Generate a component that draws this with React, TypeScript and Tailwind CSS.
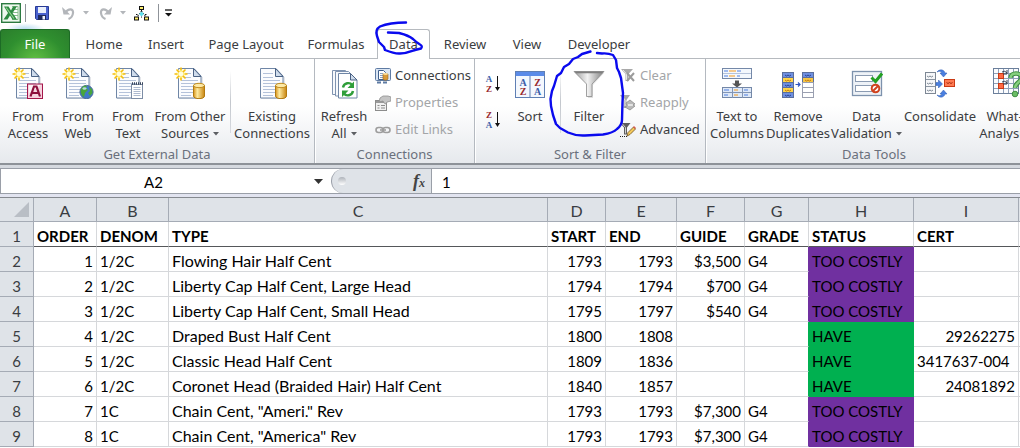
import React from "react";

type Kids = { children: React.ReactNode };

/* ---------- Icons ---------- */

function Svg32({ children }: Kids) {
  return (
    <svg viewBox="0 0 32 32" className="block size-8 shrink-0" aria-hidden="true">
      {children}
    </svg>
  );
}

function Svg16({ children }: Kids) {
  return (
    <svg viewBox="0 0 16 16" className="block size-4 shrink-0" aria-hidden="true">
      {children}
    </svg>
  );
}

function Page() {
  return (
    <g>
      <path d="M5 32h23V10" fill="none" stroke="#c9ced6" strokeWidth="1" />
      <path d="M4.500 1.500h15.500l7 7.500v22h-22.500z" fill="#fbfcfe" stroke="#6f86a6" />
      <path d="M19.500 1.500v8h7.500z" fill="#cfdcec" stroke="#4b6284" />
      <path
        d="M7 6.500h10M7 10.500h10M7 13.500h17M7 16.500h17M7 19.500h17M7 22.500h17M7 25.500h17M7 28.500h10"
        stroke="#b4c2da"
      />
    </g>
  );
}

function Burst() {
  return (
    <g>
      <circle cx="7" cy="7" r="5" fill="#fff9d0" />
      <path
        d="M7 .5v13M.5 7h13M2.500 2.500l9 9M11.500 2.500l-9 9"
        stroke="#f5bd0c"
        strokeWidth="1.600"
      />
      <path d="M7 3v8M3 7h8" stroke="#fff27a" strokeWidth="1.500" />
      <circle cx="7" cy="7" r="2.400" fill="#fffde0" />
    </g>
  );
}

function Cylinder() {
  return (
    <g>
      <path
        d="M19.500 18.500v10.500c0 3.500 11 3.500 11 0v-10.500z"
        fill="url(#gold)"
        stroke="#b27a10"
      />
      <ellipse cx="25" cy="18.500" rx="5.500" ry="2.200" fill="#fde9a6" stroke="#c08a1c" />
    </g>
  );
}

const AccessIcon = () => (
  <Svg32>
    <Page />
    <Burst />
    <rect x="15.500" y="17" width="15" height="14.500" fill="#f6d3df" stroke="#a4164a" />
    <path d="M17 18h12l-12 8z" fill="#fff" opacity=".7" />
    <path
      d="M18.500 29.500l3.500-10h2.500l3.500 10M20 26h6.500"
      fill="none"
      stroke="#8d0f3c"
      strokeWidth="2.200"
    />
  </Svg32>
);

const WebIcon = () => (
  <Svg32>
    <Page />
    <Burst />
    <circle cx="24.500" cy="25" r="6.600" fill="#3f78c9" stroke="#4b6a9a" />
    <path
      d="M19 22c2-4 5-4 6-3l-1 2 2 2-3 3-1 4c-2-1-4-4-3-8zM27 20l3 2 .5 4-2.500 3-2-3 2-2z"
      fill="#48a53c"
    />
    <ellipse cx="22.500" cy="21.500" rx="2" ry="1.300" fill="#cfe7ff" opacity=".8" />
  </Svg32>
);

const TextIcon = () => (
  <Svg32>
    <Page />
    <Burst />
    <rect x="19.500" y="17.500" width="11" height="14" fill="#fff" stroke="#7d8da6" />
    <path d="M20 16.500h11" stroke="#39465c" strokeWidth="2.500" strokeDasharray="1 1" />
    <path
      d="M21.500 20.500h7M21.500 22.500h7M21.500 24.500h7M21.500 26.500h7M21.500 28.500h7"
      stroke="#aebad0"
    />
  </Svg32>
);

const OtherIcon = () => (
  <Svg32>
    <Page />
    <Burst />
    <Cylinder />
  </Svg32>
);

const ExistingIcon = () => (
  <Svg32>
    <Page />
    <Cylinder />
  </Svg32>
);

const RefreshIcon = () => (
  <Svg32>
    <path d="M4.500 3.500h13l4 4v20h-17z" fill="#f7f9fc" stroke="#7f93b0" />
    <path d="M7.500 4.500h13l4 4v20.500h-17z" fill="#f7f9fc" stroke="#7f93b0" />
    <path d="M10.500 6.500h12l6.500 6.500v18h-18.500z" fill="#fff" stroke="#6f86a6" />
    <path d="M22.500 6.500v6.500h6.500z" fill="#cfdcec" stroke="#4b6284" />
    <path
      d="M15 20.500c1-5 7-5.500 9-2.500M25 24c-1 5-7 5.500-9 2.500"
      fill="none"
      stroke="#2f9e3a"
      strokeWidth="2.400"
    />
    <path d="M26 14.500v6.500h-6.500zM14 30v-6.500h6.500z" fill="#2f9e3a" />
  </Svg32>
);

const SortIcon = () => (
  <Svg32>
    <rect x="1.500" y="4.500" width="29" height="26" fill="#f4f8fe" stroke="#5f7fb4" />
    <rect x="2" y="5" width="28" height="4" fill="#5b8be8" />
    <path d="M16 9v21" stroke="#5f7fb4" />
    <g fontFamily="Liberation Serif, serif" fontWeight="700" fontSize="10" textAnchor="middle">
      <text x="9" y="18.500" fill="#3c5da8">A</text>
      <text x="9" y="28" fill="#98282d">Z</text>
      <text x="23.500" y="18.500" fill="#98282d">Z</text>
      <text x="23.500" y="28" fill="#3c5da8">A</text>
    </g>
  </Svg32>
);

const FunnelIcon = () => (
  <Svg32>
    <path d="M3 6l12 12v13h5V18L31 6z" fill="#000" opacity=".12" />
    <path d="M1 4.500h30L19 17v12.500h-5.500V17z" fill="url(#steel)" stroke="#8a8a8a" strokeWidth=".8" />
    <path d="M1.500 4.500h29l-1.500 1.800H3z" fill="#7e7e7e" />
  </Svg32>
);

const TextToColumnsIcon = () => (
  <Svg32>
    <rect x="1.500" y="1.500" width="29" height="10" fill="#f4f8fd" stroke="#7488a8" />
    <path d="M2 6.500h28" stroke="#b5c3da" />
    <path d="M3 4h4M16 4h4M3 9h4M16 9h3" stroke="#4f7fe0" strokeWidth="1.200" />
    <path d="M8 4h7M8 9h6" stroke="#f39a1e" strokeWidth="1.200" />
    <path d="M14 13.500h4v3h3l-5 4-5-4h3z" fill="#555" />
    <rect x="1.500" y="20.500" width="29" height="10" fill="#dfe9f7" stroke="#7488a8" />
    <path d="M2 25.500h28M11.500 21v10M21.500 21v10" stroke="#8295b5" />
    <path d="M3 23h5M23 23h4M3 28h4M23 28h4" stroke="#4f7fe0" strokeWidth="1.200" />
    <path d="M13 23h4M13 28h4" stroke="#f39a1e" strokeWidth="1.200" />
  </Svg32>
);

const DuplicatesIcon = () => (
  <Svg32>
    <g stroke="#5b6f9c">
      <rect x=".5" y="5.500" width="11" height="5" fill="#6f8fe0" />
      <rect x=".5" y="10.500" width="11" height="5" fill="#ffd54a" />
      <rect x=".5" y="15.500" width="11" height="5" fill="#6f8fe0" />
      <rect x=".5" y="20.500" width="11" height="5" fill="#ffd54a" />
      <rect x=".5" y="25.500" width="11" height="5" fill="#6f8fe0" />
      <rect x="20.500" y="5.500" width="11" height="5" fill="#6f8fe0" />
      <rect x="20.500" y="10.500" width="11" height="5" fill="#f6c646" />
      <rect x="20.500" y="15.500" width="11" height="5" fill="#fff" stroke="#9a9fb0" />
      <rect x="20.500" y="20.500" width="11" height="5" fill="#fff" stroke="#9a9fb0" />
      <rect x="20.500" y="25.500" width="11" height="5" fill="#fff" stroke="#9a9fb0" />
    </g>
    <path
      d="M3 8l1.500 1L6 8l1.500 1L9 8M3 18l1.500 1L6 18l1.500 1L9 18M3 28l1.500 1L6 28l1.500 1L9 28M23 8l1.500 1L26 8l1.500 1L29 8"
      fill="none"
      stroke="#27418f"
    />
    <path
      d="M3 13l1.500 1L6 13l1.500 1L9 13M3 23l1.500 1L6 23l1.500 1L9 23M23 13l1.500 1 1.500-1 1.500 1 1.500-1"
      fill="none"
      stroke="#c27a10"
    />
    <path d="M13.500 17.500h4M16 15.500l2 2-2 2" fill="none" stroke="#2f55c0" strokeWidth="1.200" />
  </Svg32>
);

const ValidationIcon = () => (
  <Svg32>
    <rect x="1.500" y="4.500" width="29" height="24" fill="#eef2f7" stroke="#7d92ad" strokeWidth="1.300" />
    <rect x="4.500" y="8.500" width="17" height="6" fill="#fff" stroke="#8b9bb2" />
    <rect x="4.500" y="18.500" width="17" height="6" fill="#fff" stroke="#8b9bb2" />
    <path d="M20.500 10.500l4 4L31 6.500" fill="none" stroke="#23a023" strokeWidth="3" />
    <circle cx="24.500" cy="21.500" r="3.800" fill="#fff" stroke="#d0431f" strokeWidth="2" />
    <path d="M22 24l5-5" stroke="#d0431f" strokeWidth="2" />
  </Svg32>
);

const ConsolidateIcon = () => (
  <Svg32>
    <rect x="1.500" y="5.500" width="10" height="21" fill="#f6f7f9" stroke="#7d8794" />
    <path d="M2 12.500h9M2 19.500h9" stroke="#8c96a3" />
    <path
      d="M3 9l1.500 1L6 9l1.500 1L9 9M3 16l1.500 1L6 16l1.500 1L9 16M3 23l1.500 1L6 23l1.500 1L9 23"
      fill="none"
      stroke="#7d8794"
    />
    <path d="M12 15.500h2.500v-2.500l4 4-4 4v-2.500H12z" fill="#4a7fe0" stroke="#2b58b0" strokeWidth=".5" />
    <path d="M13 5c2-3 7-3 8 1h2l-3.500 4-3.500-4h2c-1-2-3-2-5-1z" fill="#4a7fe0" stroke="#2b58b0" strokeWidth=".5" />
    <path d="M13 28c2 3 7 3 8-1h2l-3.500-4-3.500 4h2c-1 2-3 2-5 1z" fill="#4a7fe0" stroke="#2b58b0" strokeWidth=".5" />
    <rect x="20.500" y="12.500" width="10" height="7" fill="#ff7a52" stroke="#c93a15" />
    <path d="M22.500 15.500l1.500 1 1.500-1 1.500 1 1.500-1" fill="none" stroke="#a32b0c" />
  </Svg32>
);

const WhatIfIcon = () => (
  <Svg32>
    <rect x=".5" y="1.500" width="25" height="25" fill="#fbfcfe" stroke="#6b7f9b" />
    <path d="M5.500 2v24M10.500 2v24M15.500 2v24M20.500 2v24M1 6.500h24M1 11.500h24M1 16.500h24M1 21.500h24" stroke="#8fa0b8" />
    <rect x="5.500" y="6.500" width="5" height="5" fill="#ff6a45" stroke="#c93a15" />
    <rect x="5.500" y="16.500" width="5" height="5" fill="#ff6a45" stroke="#c93a15" />
    <path d="M9 5q3-2 5 1M14 3v4h-4M9 15q3-2 5 1M14 13v4h-4" fill="none" stroke="#333e50" />
    <path
      d="M17.500 11c0-6 11-6 11 0 0 4-6.500 4.500-6.500 10"
      fill="none"
      stroke="#3f8f41"
      strokeWidth="4.500"
    />
    <path d="M17.500 11c0-6 11-6 11 0 0 4-6.500 4.500-6.500 10" fill="none" stroke="#86cf7f" strokeWidth="2.500" />
    <circle cx="22" cy="27" r="2.800" fill="#6bbd66" stroke="#3f8f41" />
  </Svg32>
);

const ConnectionsIcon = () => (
  <Svg16>
    <rect x=".5" y=".5" width="15" height="12" rx="1" fill="#dbe6f4" stroke="#5e7ba3" />
    <path d="M3.500 2.500h5l2 2v7h-7z" fill="#fff" stroke="#41608c" />
    <path d="M5 5.500h3M5 7.500h3M5 9.500h3" stroke="#8ba2c4" />
    <path d="M8 6v5c0 1.500 5 1.500 5 0V6z" fill="#d99a3a" stroke="#9a6418" strokeWidth=".6" />
    <ellipse cx="10.500" cy="6" rx="2.500" ry="1" fill="#fbdc98" />
    <path d="M2 14.500h11" stroke="#5e7ba3" strokeWidth="2" strokeDasharray="4 2" />
  </Svg16>
);

const PropertiesIcon = () => (
  <Svg16>
    <rect x=".5" y="5.500" width="11" height="10" fill="#f1f1f1" stroke="#8c8c8c" />
    <path d="M1 7h10" stroke="#9a9a9a" strokeWidth="2" />
    <path d="M2.500 10.500h2M6 10.500h4M2.500 13h2M6 13h4" stroke="#8c8c8c" />
    <path d="M5 3l3-2h5l3 1v4l-4 1-1 2-2-1-1-2-4 1z" fill="#c5c5c5" stroke="#8f8f8f" strokeWidth=".8" />
  </Svg16>
);

const LinksIcon = () => (
  <Svg16>
    <g fill="none" stroke="#9d9d9d" strokeWidth="1.600">
      <rect x="1" y="5.500" width="7" height="5" rx="2.500" />
      <rect x="8" y="5.500" width="7" height="5" rx="2.500" />
      <path d="M5 8h6" />
    </g>
  </Svg16>
);

const ClearIcon = () => (
  <Svg16>
    <path d="M1 1h12L8.500 6v7h-3V6z" fill="#a9a9a9" />
    <path d="M3 2l3.500 4v6" fill="none" stroke="#e8e8e8" />
    <path d="M7 5l7 8M14 5l-7 8" stroke="#9b9b9b" strokeWidth="2" />
  </Svg16>
);

const ReapplyIcon = () => (
  <Svg16>
    <path d="M0 0h10L6.500 5v8h-3V5z" fill="#a9a9a9" />
    <path d="M2 1l3 4v6" fill="none" stroke="#e8e8e8" />
    <path d="M6 8l4-3 5 4-3 1 3 1-5 4-5-3 2-1z" fill="#b9b9b9" stroke="#8e8e8e" strokeWidth=".8" />
    <path d="M8 10h5" stroke="#f3f3f3" strokeWidth="1.500" />
  </Svg16>
);

const AdvancedIcon = () => (
  <Svg16>
    <path d="M0 1h10.500L7 5.500v7H4v-7z" fill="#5e5e5e" />
    <path d="M2 1.500l3.500 4v6" fill="none" stroke="#cfcfcf" />
    <path d="M0 14.500h8" stroke="#222" strokeDasharray="1 1" />
    <path d="M7 14l1-3.500 5.500-5.500 2 2L10 12.500z" fill="#f5c95a" stroke="#6d5120" strokeWidth=".8" />
    <path d="M13 5l1-1 2 2-1 1z" fill="#d45a52" />
  </Svg16>
);

function SortArrowIcon({ top, bottom }: { top: string; bottom: string }) {
  const tone = (c: string) => (c === "A" ? "#3c5da8" : "#98282d");
  return (
    <svg viewBox="0 0 16 18" className="block h-[18px] w-4" aria-hidden="true">
      <g fontFamily="Liberation Serif, serif" fontWeight="700" fontSize="9" textAnchor="middle">
        <text x="4" y="7" fill={tone(top)}>{top}</text>
        <text x="4" y="17" fill={tone(bottom)}>{bottom}</text>
      </g>
      <path d="M12.500 1v12" stroke="#111" />
      <path d="M10 12h5l-2.500 4z" fill="#111" />
    </svg>
  );
}

function Caret({ className = "text-[#5c5f63]" }: { className?: string }) {
  return (
    <svg viewBox="0 0 6 4" className={"inline-block h-1 w-1.5 shrink-0 " + className} aria-hidden="true">
      <path d="M0 0h6L3 3.500z" fill="currentColor" />
    </svg>
  );
}

const ExcelIcon = () => (
  <svg viewBox="0 0 20 20" className="block size-5" aria-hidden="true">
    <rect x=".7" y=".7" width="18.600" height="18.600" fill="#eef8ee" stroke="#2c7a41" strokeWidth="1.400" />
    <path d="M11 3.500h6v13h-6" fill="#fff" stroke="#86bd8c" />
    <path d="M12 6.500h5M12 9.500h5M12 12.500h5" stroke="#86bd8c" />
    <path d="M3 3.500h4.500l2.500 4L12 3.500h4L11.500 10l4.500 6.500h-4.500L9 12.500l-2.500 4H2.500L7 10z" fill="#2d8a41" />
    <path d="M5 4.500L13 15.500" stroke="#8fd08f" strokeWidth="1.200" />
  </svg>
);

const SaveIcon = () => (
  <svg viewBox="0 0 14 14" className="block size-3.5" aria-hidden="true">
    <path d="M.5.5h13v13h-12l-1-1z" fill="#4a62cf" stroke="#283a94" />
    <rect x="3" y="1" width="8" height="6" fill="#e9effb" />
    <rect x="3" y="9" width="8" height="5" fill="#1e2a5e" />
    <rect x="7.500" y="10" width="2.500" height="3.500" fill="#f0f3fb" />
  </svg>
);

const UndoIcon = ({ flip = false }: { flip?: boolean }) => (
  <svg
    viewBox="0 0 13 14"
    className={flip ? "block h-3.5 w-[13px] -scale-x-100" : "block h-3.5 w-[13px]"}
    aria-hidden="true"
  >
    <path d="M0 1l1.500 7.500H8L5.500 6z" fill="#b3b6ba" />
    <path d="M3.500 6.500C6 2.500 11.500 2 11 7c-.3 3-2 5-4.500 6" fill="none" stroke="#b3b6ba" strokeWidth="2.200" />
  </svg>
);

const TreeIcon = () => (
  <svg viewBox="0 0 15 15" className="block size-[15px]" aria-hidden="true">
    <path d="M7.500 4v8M7.500 5L3 11M7.500 5l4.500 6M2 8.500h2M11 8.500h2" stroke="#111" strokeDasharray="1.500 1" />
    <path d="M7.500 5.500l2.500 2.500-2.500 2.500L5 8z" fill="#5fe0ee" />
    <g fill="#ffef6b" stroke="#111">
      <rect x="5.500" y=".5" width="4" height="3" />
      <rect x=".5" y="11" width="4" height="3" />
      <rect x="10.500" y="11" width="4" height="3" />
    </g>
  </svg>
);

/* ---------- Ribbon ---------- */

type BigProps = {
  icon: React.ReactNode;
  lines: string[];
  width: string;
  menu?: boolean;
};

function BigButton({ icon, lines, width, menu }: BigProps) {
  return (
    <button type="button" className={"flex shrink-0 flex-col items-center pt-2 " + width}>
      {icon}
      <span className="mt-[9px] block text-center leading-[17px] whitespace-nowrap">
        {lines.map((line, i) => (
          <span key={line} className="flex items-center justify-center gap-1">
            {line}
            {menu && i === lines.length - 1 && <Caret />}
          </span>
        ))}
      </span>
    </button>
  );
}

function SmallButton({ icon, label, disabled }: { icon: React.ReactNode; label: string; disabled?: boolean }) {
  return (
    <button
      type="button"
      disabled={disabled}
      className="flex h-[27px] items-center gap-1 whitespace-nowrap disabled:text-[#a3a5a8]"
    >
      {icon}
      {label}
    </button>
  );
}

function Group({ label, width, children }: Kids & { label: string; width: string }) {
  return (
    <section
      aria-label={label}
      className={"flex shrink-0 flex-col border-r border-[#b4b9c0] shadow-[1px_0_0_#ffffff] " + width}
    >
      <div className="flex h-[87px]">{children}</div>
      <h2 className="text-center leading-[17px] text-[#6a707c]">{label}</h2>
    </section>
  );
}

const Divider = () => (
  <div className="mt-3 h-[62px] w-px shrink-0 bg-linear-to-b from-transparent via-[#c3c7cd] to-[#d8dbe0]" />
);

const tabs = [
  { name: "Home", width: "w-[62px]" },
  { name: "Insert", width: "w-[62px]" },
  { name: "Page Layout", width: "w-[98px]" },
  { name: "Formulas", width: "w-[82px]" },
  { name: "Data", width: "w-[53px]" },
  { name: "Review", width: "w-[70px]" },
  { name: "View", width: "w-[54px]" },
  { name: "Developer", width: "w-[90px]" },
];

/* ---------- Sheet ---------- */

const columns = ["A", "B", "C", "D", "E", "F", "G", "H", "I"];
const headings = ["ORDER", "DENOM", "TYPE", "START", "END", "GUIDE", "GRADE", "STATUS", "CERT"];
const rows = [
  ["1", "1/2C", "Flowing Hair Half Cent", "1793", "1793", "$3,500", "G4", "TOO COSTLY", ""],
  ["2", "1/2C", "Liberty Cap Half Cent, Large Head", "1794", "1794", "$700", "G4", "TOO COSTLY", ""],
  ["3", "1/2C", "Liberty Cap Half Cent, Small Head", "1795", "1797", "$540", "G4", "TOO COSTLY", ""],
  ["4", "1/2C", "Draped Bust Half Cent", "1800", "1808", "", "", "HAVE", "29262275"],
  ["5", "1/2C", "Classic Head Half Cent", "1809", "1836", "", "", "HAVE", "3417637-004"],
  ["6", "1/2C", "Coronet Head (Braided Hair) Half Cent", "1840", "1857", "", "", "HAVE", "24081892"],
  ["7", "1C", "Chain Cent, \"Ameri.\" Rev", "1793", "1793", "$7,300", "G4", "TOO COSTLY", ""],
  ["8", "1C", "Chain Cent, \"America\" Rev", "1793", "1793", "$7,300", "G4", "TOO COSTLY", ""],
];

function cellTone(row: string[], column: number) {
  const have = row[7] === "HAVE";
  if (column === 6) return have ? "border-b-[#d6d8db] border-r-[#00b050]" : "border-b-[#d6d8db] border-r-[#7030a0]";
  if (column === 7) return have ? "border-[#00b050] bg-[#00b050]" : "border-[#7030a0] bg-[#7030a0]";
  return "border-[#d6d8db]";
}

function cellText(value: string, column: number) {
  if (column === 2) return "text-left text-base leading-5";
  const numeric = [0, 3, 4, 5, 8].includes(column) && !value.includes("-");
  return numeric ? "text-right" : "text-left";
}

const rowHead =
  "h-[25px] border-r border-b border-[#a5abb5] bg-[#dfe3e8] px-0 pt-1 pb-0 text-center font-normal text-[#3a3d42]";

function Sheet() {
  return (
    <table className="w-full table-fixed border-separate border-spacing-0 font-[Lato,'Liberation_Sans',sans-serif] text-[15px] leading-5 whitespace-nowrap text-black">
      <colgroup>
        <col className="w-[34px]" />
        <col className="w-[63px]" />
        <col className="w-[72px]" />
        <col className="w-[379px]" />
        <col className="w-[58px]" />
        <col className="w-[71px]" />
        <col className="w-[68px]" />
        <col className="w-16" />
        <col className="w-[105px]" />
        <col className="w-[105px]" />
        <col />
      </colgroup>
      <thead>
        <tr className="bg-[#dfe3e8] text-[#3a3d42]">
          <td className="h-6 border-r border-b border-[#a5abb5] p-0">
            <svg viewBox="0 0 15 15" className="ml-3.5 block size-[15px]" aria-hidden="true">
              <path d="M15 0v15H0z" fill="#b9bec5" />
            </svg>
          </td>
          {columns.map((c) => (
            <th key={c} scope="col" className="border-r border-b border-[#a5abb5] px-0 pt-0.5 pb-0 text-base leading-5 font-normal">
              {c}
            </th>
          ))}
          <td className="border-b border-[#a5abb5] p-0" />
        </tr>
      </thead>
      <tbody>
        <tr>
          <th scope="row" className={rowHead}>1</th>
          {headings.map((h) => (
            <th key={h} scope="col" className="border-r border-b border-r-[#d6d8db] border-b-[#55575a] px-[3px] pt-1 pb-0 text-left font-bold">
              {h}
            </th>
          ))}
          <td className="border-b border-[#55575a] p-0" />
        </tr>
        {rows.map((row, r) => (
          <tr key={row[0]}>
            <th scope="row" className={rowHead}>{r + 2}</th>
            {row.map((value, c) => (
              <td
                key={columns[c]}
                className={"border-r border-b px-[3px] pt-1 pb-0 " + cellTone(row, c) + " " + cellText(value, c)}
              >
                {value}
              </td>
            ))}
            <td className="border-b border-[#d6d8db] p-0" />
          </tr>
        ))}
      </tbody>
    </table>
  );
}

/* ---------- Hand-drawn marks ---------- */

function InkMarks() {
  return (
    <svg
      viewBox="0 0 260 120"
      className="pointer-events-none absolute top-5 left-[370px] h-[120px] w-[260px]"
      fill="none"
      stroke="#0a0aee"
      strokeWidth="2.400"
      strokeLinecap="round"
      strokeLinejoin="round"
      aria-hidden="true"
    >
      <path d="M36 2.500C26 2.500 16 4 10 6.500C6 9 6 13 7 16L9 22L14 27L15 30C20 32 25 34 30 33.500C37 33.500 42 31 45 30L51 28.500Q53 26 50 24.500Q46 22 43 19C38 15 33 14 29 13L18 12.500" />
      <path d="M220.500 31.500L212 34L208 37L203 39L199 44L194 47L191 53L187 56L184 66L182 71L180.500 79L181 86L183 95L186 104L190 108L198 112.500Q206 116 215 115.500L233 114.500Q243 113 247 109Q252 105 252 100L252.500 82L253 73L251 58L249 52L247 48L246 40L243 35Q238 33 232 33.500L227 33" />
    </svg>
  );
}

export default function App() {
  return (
    <main className="relative h-screen overflow-hidden bg-white font-['Noto_Sans','Open_Sans',sans-serif] text-[13px] text-[#3b3d41]">
      <svg width="0" height="0" className="absolute" aria-hidden="true">
        <defs>
          <linearGradient id="gold">
            <stop offset="0" stopColor="#d8931a" />
            <stop offset=".35" stopColor="#fdeaa0" />
            <stop offset="1" stopColor="#c98510" />
          </linearGradient>
          <linearGradient id="steel">
            <stop offset="0" stopColor="#9b9b9b" />
            <stop offset=".45" stopColor="#f2f2f2" />
            <stop offset="1" stopColor="#7f7f7f" />
          </linearGradient>
        </defs>
      </svg>

      <div className="flex h-[29px] items-center bg-[radial-gradient(ellipse_20px_6px_at_25px_29px,#b9dcf0,transparent)] pb-[3px] pl-px">
        <ExcelIcon />
        <div className="ml-1 h-[18px] w-px bg-[#8f9399]" />
        <button type="button" aria-label="Save" className="ml-[9px]"><SaveIcon /></button>
        <button type="button" aria-label="Undo" className="ml-[13px]"><UndoIcon /></button>
        <button type="button" aria-label="Undo history" className="ml-2 flex text-[#b3b6ba]"><Caret className="" /></button>
        <button type="button" aria-label="Redo" className="ml-2.5"><UndoIcon flip /></button>
        <button type="button" aria-label="Redo history" className="ml-2 flex text-[#b3b6ba]"><Caret className="" /></button>
        <button type="button" aria-label="Organization chart" className="ml-2"><TreeIcon /></button>
        <div className="ml-[9px] h-[18px] w-px bg-[#8f9399]" />
        <button type="button" aria-label="Customize toolbar" className="ml-1.5">
          <svg viewBox="0 0 7 8" className="block h-2 w-[7px]" aria-hidden="true">
            <path d="M0 1h7" stroke="#111" strokeWidth="1.300" />
            <path d="M0 4h7L3.500 7.500z" fill="#111" />
          </svg>
        </button>
      </div>

      <nav className="flex h-[30px] border-b border-[#b6babf]">
        <button
          type="button"
          className="w-[70px] shrink-0 rounded-t-[3px] border border-b-0 border-[#1c6b25] bg-[radial-gradient(ellipse_at_50%_110%,#62c043,#2f8f2f_60%,#2a7d2c)] pt-0.5 text-white"
        >
          File
        </button>
        <div className="ml-[3px] flex">
          {tabs.map((t) => (
            <button
              key={t.name}
              type="button"
              className={
                t.name === "Data"
                  ? "-mb-px shrink-0 rounded-t-[3px] border border-b-0 border-[#b6babf] bg-white pt-px whitespace-nowrap " + t.width
                  : "shrink-0 pt-0.5 whitespace-nowrap " + t.width
              }
            >
              {t.name}
            </button>
          ))}
        </div>
      </nav>

      <div className="flex h-[104px] overflow-hidden bg-linear-to-b from-white from-45% to-[#e6e9ed]">
        <Group label="Get External Data" width="w-[315px]">
          <div className="w-[3px] shrink-0" />
          <BigButton icon={<AccessIcon />} lines={["From", "Access"]} width="w-[50px]" />
          <BigButton icon={<WebIcon />} lines={["From", "Web"]} width="w-[50px]" />
          <BigButton icon={<TextIcon />} lines={["From", "Text"]} width="w-[50px]" />
          <BigButton icon={<OtherIcon />} lines={["From Other", "Sources"]} width="w-[74px]" menu />
          <div className="w-[3px] shrink-0" />
          <Divider />
          <BigButton icon={<ExistingIcon />} lines={["Existing", "Connections"]} width="w-[82px]" />
        </Group>

        <Group label="Connections" width="w-[160px]">
          <BigButton icon={<RefreshIcon />} lines={["Refresh", "All"]} width="w-[58px]" menu />
          <div className="ml-0.5 flex flex-col pt-[3px]">
            <SmallButton icon={<ConnectionsIcon />} label="Connections" />
            <SmallButton icon={<PropertiesIcon />} label="Properties" disabled />
            <SmallButton icon={<LinksIcon />} label="Edit Links" disabled />
          </div>
        </Group>

        <Group label="Sort &amp; Filter" width="w-[231px]">
          <div className="flex w-9 shrink-0 flex-col items-center gap-[18px] pt-4">
            <button type="button" aria-label="Sort A to Z"><SortArrowIcon top="A" bottom="Z" /></button>
            <button type="button" aria-label="Sort Z to A"><SortArrowIcon top="Z" bottom="A" /></button>
          </div>
          <BigButton icon={<SortIcon />} lines={["Sort"]} width="w-[38px]" />
          <div className="w-[11px] shrink-0" />
          <Divider />
          <BigButton icon={<FunnelIcon />} lines={["Filter"]} width="w-[56px]" />
          <div className="ml-[3px] flex flex-col pt-[3px]">
            <SmallButton icon={<ClearIcon />} label="Clear" disabled />
            <SmallButton icon={<ReapplyIcon />} label="Reapply" disabled />
            <SmallButton icon={<AdvancedIcon />} label="Advanced" />
          </div>
        </Group>

        <Group label="Data Tools" width="w-[337px]">
          <BigButton icon={<TextToColumnsIcon />} lines={["Text to", "Columns"]} width="w-[62px]" />
          <BigButton icon={<DuplicatesIcon />} lines={["Remove", "Duplicates"]} width="w-[60px]" />
          <BigButton icon={<ValidationIcon />} lines={["Data", "Validation"]} width="w-[77px]" menu />
          <BigButton icon={<ConsolidateIcon />} lines={["Consolidate"]} width="w-[70px]" />
          <BigButton icon={<WhatIfIcon />} lines={["What-If", "Analysis"]} width="w-[68px]" menu />
        </Group>
      </div>

      <div className="h-[5px] border-t-2 border-[#8d9298] bg-[#d5d9df]" />

      <div className="flex h-[26px] border-y border-l border-[#9a9fa8] bg-[#dfe3e8]">
        <div className="flex w-[330px] shrink-0 items-center bg-white">
          <input
            aria-label="Name box"
            defaultValue="A2"
            className="h-full w-[305px] bg-transparent pt-0.5 text-center font-[Lato,'Liberation_Sans',sans-serif] text-[15px] text-black outline-none"
          />
          <button type="button" aria-label="Show names" className="flex h-full w-6 items-center justify-center">
            <svg viewBox="0 0 9 5" className="block h-[5px] w-[9px]" aria-hidden="true">
              <path d="M0 0h9L4.500 5z" fill="#333" />
            </svg>
          </button>
        </div>
        <div className="flex w-[100px] shrink-0 bg-white">
          <div className="flex w-full items-center justify-between rounded-l-full border-l border-[#9a9fa8] bg-[#dfe3e8] px-1.5">
            <span className="size-2 rounded-full bg-linear-to-b from-[#aeb3ba] to-white" />
            <button
              type="button"
              aria-label="Insert function"
              className="font-['Liberation_Serif',serif] text-lg leading-5 font-bold text-[#444] italic"
            >
              f<span className="text-xs">x</span>
            </button>
          </div>
        </div>
        <input
          aria-label="Formula bar"
          defaultValue="1"
          className="min-w-0 flex-1 border-l border-[#9a9fa8] bg-white pt-0.5 pl-2.5 font-[Lato,'Liberation_Sans',sans-serif] text-[15px] text-black outline-none"
        />
      </div>

      <div className="h-1 border-b border-[#85898f] bg-[#e2e4f0]" />

      <Sheet />
      <InkMarks />
    </main>
  );
}
